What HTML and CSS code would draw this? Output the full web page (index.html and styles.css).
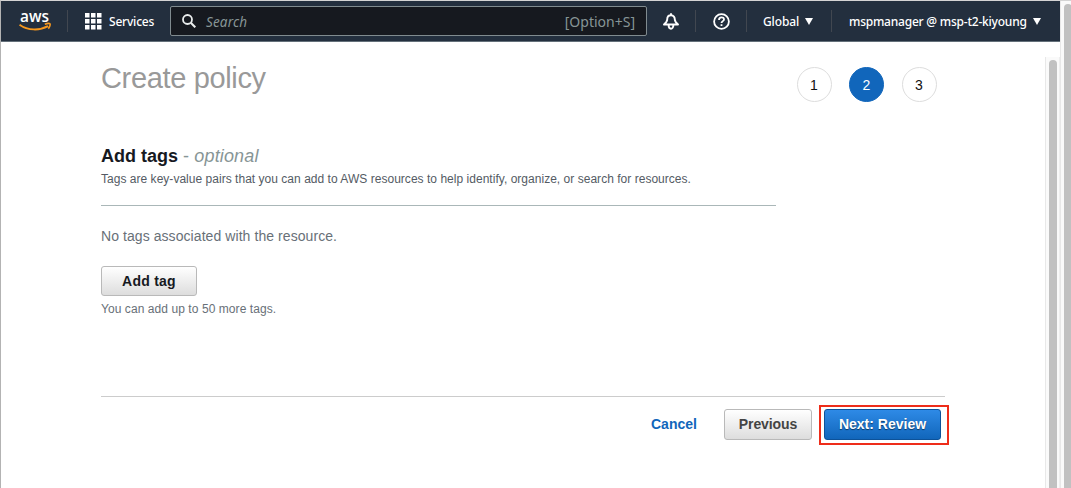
FILE: index.html
```html
<!DOCTYPE html>
<html lang="en">
<head>
<meta charset="utf-8">
<title>Create policy</title>
<link rel="stylesheet" href="styles.css">
</head>
<body>
<div class="window">
  <div class="page">
    <header class="nav">
      <svg class="logo" viewBox="0 -8 34 40" width="34" height="40">
        <text class="logo-text" x="1" y="12.5" textLength="29" lengthAdjust="spacingAndGlyphs">aws</text>
        <path d="M0.500 15.700c8.500 6 20 6.100 28.500 1.500" fill="none" stroke="#f7981d" stroke-width="1.900"/>
        <path d="M25.800 15.300c2-.8 4.700-.9 5.200-.4s-.2 3-1.700 4.700" fill="none" stroke="#f7981d" stroke-width="1.600"/>
      </svg>
      <span class="sep sep-logo"></span>
      <svg class="grid-icon" viewBox="0 0 17 17" width="17" height="17" fill="#fff">
        <path d="M0 0h4.500v4.500H0zM6 0h4.500v4.500H6zM12 0h4.500v4.500H12zM0 6h4.500v4.500H0zM6 6h4.500v4.500H6zM12 6h4.500v4.500H12zM0 12h4.500v4.500H0zM6 12h4.500v4.500H6zM12 12h4.500v4.500H12z"/>
      </svg>
      <span class="nav-label services">Services</span>
      <div class="search">
        <svg viewBox="0 0 14 14" width="14" height="14" fill="none" stroke="#eaeded" stroke-width="1.800"><circle cx="5.500" cy="5.500" r="4.500"/><path d="M8.800 8.800l4.500 4.500" stroke-width="2.100"/></svg>
        <span class="placeholder">Search</span>
        <span class="shortcut">[Option+S]</span>
      </div>
      <svg class="bell" viewBox="0 0 16 17" width="16" height="17" fill="none" stroke="#fff" stroke-width="1.900" stroke-linejoin="round">
        <path d="M8 2.300C5.300 2.300 4.200 4.200 4.200 6.500c0 2-1.200 3.200-3.200 5h14c-2-1.800-3.200-3-3.200-5C11.800 4.200 10.700 2.300 8 2.300zM8 .3v2M5.600 12c0 4.900 4.800 4.900 4.800 0"/>
      </svg>
      <span class="sep sep-bell"></span>
      <svg class="help" viewBox="0 0 17 17" width="17" height="17" fill="none" stroke="#fff" stroke-width="1.800">
        <circle cx="8.500" cy="8.500" r="7.400"/><path d="M6 6.900c0-3.600 5-3.200 5-.5 0 1.800-2.500 1.700-2.500 3.700M8.500 11.200v1.900"/>
      </svg>
      <span class="sep sep-help"></span>
      <span class="nav-label global">Global</span>
      <svg class="caret" viewBox="0 0 8 7" width="8" height="7"><path d="M0 0h8L4 7z" fill="#fff"/></svg>
      <span class="sep sep-global"></span>
      <span class="nav-label account">mspmanager @ msp-t2-kiyoung</span>
      <svg class="caret" viewBox="0 0 8 7" width="8" height="7"><path d="M0 0h8L4 7z" fill="#fff"/></svg>
    </header>
    <div class="body">
      <main class="content">
        <div class="title-row">
          <h1>Create policy</h1>
          <ol class="steps"><li>1</li><li class="current">2</li><li>3</li></ol>
        </div>
        <section class="tags">
          <h2>Add tags <span class="optional">- <i>optional</i></span></h2>
          <p class="description">Tags are key-value pairs that you can add to AWS resources to help identify, organize, or search for resources.</p>
        </section>
        <p class="empty">No tags associated with the resource.</p>
        <button class="btn add">Add tag</button>
        <p class="hint">You can add up to 50 more tags.</p>
        <footer class="actions">
          <a class="cancel">Cancel</a>
          <button class="btn previous">Previous</button>
          <div class="highlight"><button class="btn next">Next: Review</button></div>
        </footer>
      </main>
      <div class="scroll inner"><div class="thumb"></div></div>
    </div>
  </div>
  <div class="scroll outer"><div class="thumb"></div></div>
</div>
</body>
</html>
```
FILE: styles.css
```css
* { box-sizing: border-box; }
body { margin: 0; background: #fff; font-family: "Liberation Sans", Arial, sans-serif; overflow: hidden; }
h1, h2, p, ol { margin: 0; padding: 0; font-weight: 400; white-space: nowrap; }
svg { display: block; flex: none; }
.window { display: flex; height: 488px; border-left: 1px solid #b3b3b3; border-top: 1px solid #d4d4d4; }
.page { width: 1059px; flex: none; display: flex; flex-direction: column; }
.nav { height: 41px; flex: none; display: flex; align-items: center; background: #232f3e; border-bottom: 1px solid #64707a; font-family: "Noto Sans", sans-serif; color: #fff; }
.logo { margin-left: 18px; }
.logo-text { font: 600 17px "Open Sans", sans-serif; fill: #fff; }
.sep { width: 1px; height: 22px; flex: none; background: #414750; }
.sep-logo { margin-left: 14px; }
.grid-icon { margin-left: 17px; }
.nav-label { flex: none; padding-top: 1px; font-size: 12px; line-height: 18px; font-weight: 500; white-space: nowrap; }
.services { margin-left: 7px; width: 46px; letter-spacing: -.2px; }
.search { margin-left: 15px; width: 477px; height: 30px; flex: none; display: flex; align-items: center; padding: 0 11px 0 11px; border: 1px solid #808b8f; border-radius: 2px; background: #16191f; color: #879596; font-size: 14px; line-height: 20px; }
.placeholder { margin-left: 10px; padding-top: 1px; font-style: italic; font-size: 13.500px; letter-spacing: .15px; }
.shortcut { margin-left: auto; padding-top: 1px; }
.bell { margin-left: 16px; }
.sep-bell { margin-left: 16px; }
.help { margin-left: 17px; }
.sep-help { margin-left: 16px; }
.global { margin-left: 16px; width: 36px; letter-spacing: -.1px; }
.caret { margin-left: 6px; }
.sep-global { margin-left: 18px; }
.account { margin-left: 17px; width: 178px; letter-spacing: -.22px; }
.body { flex: 1; display: flex; }
.content { width: 844px; margin-left: 100px; flex: none; display: flex; flex-direction: column; align-items: flex-start; }
.title-row { width: 100%; height: 103px; display: flex; justify-content: space-between; padding: 19px 8.500px 0 0; }
h1 { font-size: 29px; line-height: 34px; color: #999; letter-spacing: -.35px; }
.steps { display: flex; gap: 17.500px; list-style: none; margin-top: 6px; }
.steps li { width: 35px; height: 35px; border: 1px solid #ddd; border-radius: 50%; text-align: center; font-size: 14px; line-height: 35px; color: #111; }
.steps .current { background: #1166bb; border-color: #1166bb; color: #fff; }
.tags { width: 675px; height: 61px; border-bottom: 1px solid #aab7b8; }
h2 { font-size: 18px; line-height: 22px; font-weight: 700; color: #16191f; }
.optional { color: #879596; font-weight: 400; letter-spacing: .15px; }
.description { margin-top: 3px; font-size: 12px; line-height: 18px; color: #545b64; letter-spacing: .027px; }
.empty { margin-top: 20px; font-size: 14px; line-height: 20px; color: #687078; letter-spacing: .07px; }
.btn { display: block; padding: 0; border: 1px solid #b9b9b9; border-radius: 3px; background: linear-gradient(#fff, #ddd); font: 700 14px/28px "Liberation Sans", Arial, sans-serif; color: #444; white-space: nowrap; }
.add { width: 96px; height: 30px; margin-top: 20px; color: #16191f; letter-spacing: .25px; }
.hint { margin-top: 4px; font-size: 12px; line-height: 18px; color: #687078; letter-spacing: .07px; }
.actions { margin-top: 78px; width: 848px; height: 60px; background: linear-gradient(#ccc, #ccc) 0 0 / 844px 1px no-repeat; display: flex; align-items: flex-start; }
.cancel { margin-left: 550px; margin-top: 18px; width: 47px; font-size: 14px; line-height: 20px; font-weight: 700; color: #1166bb; }
.previous { width: 88px; height: 31px; margin: 13px 0 0 26px; padding-bottom: 2px; flex: none; letter-spacing: -.1px; }
.highlight { margin: 9px 0 0 7px; width: 130px; height: 40px; flex: none; padding: 2px 0 0 3px; border: 2px solid #ee2d1a; }
.next { width: 117px; height: 31px; padding-bottom: 2px; background: linear-gradient(#2e8ae6, #1166bb); border-color: #0d5299; color: #fff; text-shadow: 0 1px 1px #0008; }
.scroll { background: #fafafa; border-left: 1px solid #e8e8e8; }
.thumb { background: #c1c1c1; border-radius: 5px 5px 0 0; }
.inner { margin: 15px 0 0 100px; width: 15px; padding: 3px 3px 0; border-right: 1px solid #eee; flex: none; }
.inner .thumb { width: 8px; height: 440px; }
.outer { flex: 1; padding: 3px 0 0 3px; }
.outer .thumb { width: 8px; height: 484px; }
```
